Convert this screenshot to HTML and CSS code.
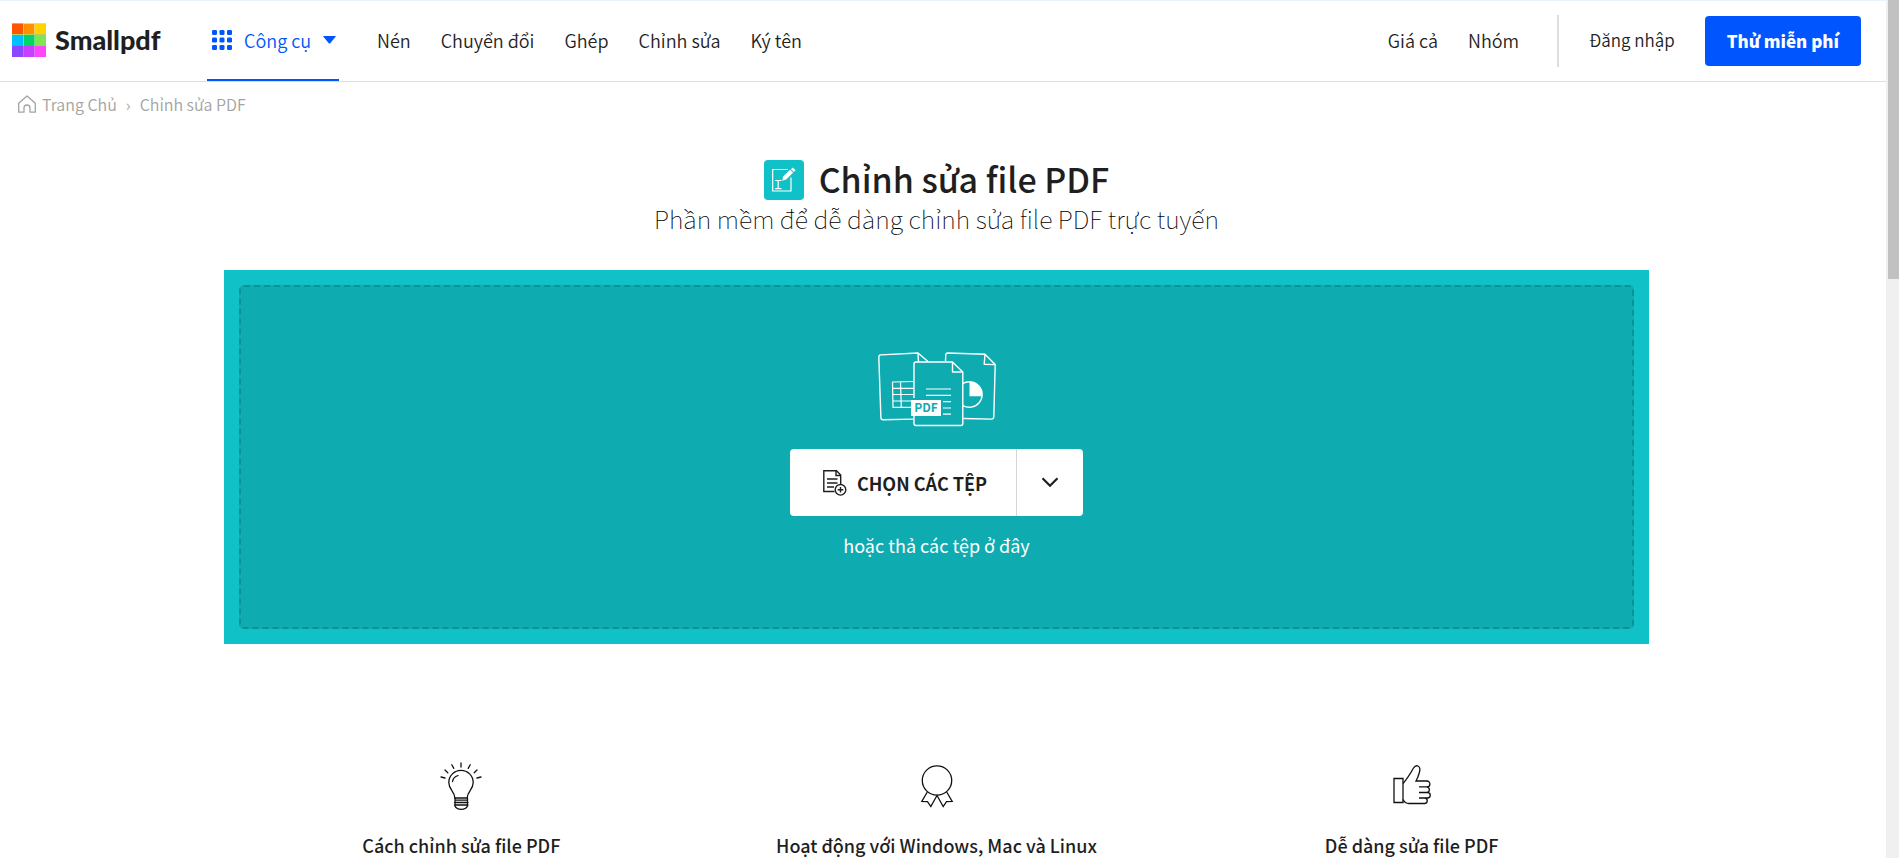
FILE: index.html
```html
<!DOCTYPE html>
<html lang="vi">
<head>
<meta charset="utf-8">
<meta name="viewport" content="width=device-width, initial-scale=1">
<title>Chỉnh sửa file PDF - Smallpdf</title>
<link rel="stylesheet" href="styles.css">
</head>
<body>
<div class="page">
  <header class="header">
    <a class="logo" href="#">
      <svg width="34" height="34" viewBox="0 0 34 34" aria-hidden="true">
        <rect width="34" height="34" fill="#ff9a5c"/>
        <rect x="0" y="1" width="11" height="10" fill="#ff5500"/><rect x="12" y="1" width="10" height="10" fill="#ff9000"/><rect x="23" y="1" width="11" height="10" fill="#ffd200"/>
        <rect x="11" y="0" width="23" height="1" fill="#ffd27a"/><rect x="11" y="1" width="1" height="10" fill="#ffb45c"/><rect x="22" y="1" width="1" height="10" fill="#ffc75c"/>
        <rect y="11" width="34" height="23" fill="#9b7dff"/>
        <rect y="11" width="34" height="1" fill="#b0d060"/>
        <rect x="0" y="12" width="11" height="11" fill="#00bfff"/><rect x="11" y="12" width="1" height="11" fill="#5ce0d0"/><rect x="12" y="12" width="10" height="11" fill="#00d46a"/><rect x="22" y="12" width="1" height="11" fill="#60df80"/><rect x="23" y="12" width="11" height="11" fill="#80e650"/>
        <rect x="0" y="23" width="11" height="11" fill="#8c46ff"/><rect x="12" y="23" width="10" height="11" fill="#c840ff"/><rect x="22" y="23" width="1" height="11" fill="#e070ff"/><rect x="23" y="23" width="11" height="11" fill="#ff46fa"/>
      </svg>
      <span class="logo-name">Smallpdf</span>
    </a>
    <button class="tools" type="button">
      <svg width="20" height="20" viewBox="0 0 20 20" fill="#0055ff" aria-hidden="true">
        <rect width="5" height="5" rx="1.3"/><rect x="7.5" width="5" height="5" rx="1.3"/><rect x="15" width="5" height="5" rx="1.3"/>
        <rect y="7.5" width="5" height="5" rx="1.3"/><rect x="7.5" y="7.5" width="5" height="5" rx="1.3"/><rect x="15" y="7.5" width="5" height="5" rx="1.3"/>
        <rect y="15" width="5" height="5" rx="1.3"/><rect x="7.5" y="15" width="5" height="5" rx="1.3"/><rect x="15" y="15" width="5" height="5" rx="1.3"/>
      </svg>
      <span>Công cụ</span>
      <svg width="13" height="8" viewBox="0 0 13 8" fill="#0055ff" aria-hidden="true"><path d="M.8 0h11.4q1 0 .4.8L7.2 7.2q-.7.6-1.4 0L.4.8Q-.2 0 .8 0z"/></svg>
    </button>
    <nav class="nav">
      <a href="#">Nén</a>
      <a href="#">Chuyển đổi</a>
      <a href="#">Ghép</a>
      <a href="#">Chỉnh sửa</a>
      <a href="#">Ký tên</a>
    </nav>
    <nav class="nav nav-end">
      <a href="#">Giá cả</a>
      <a href="#">Nhóm</a>
    </nav>
    <div class="account">
      <a class="login" href="#">Đăng nhập</a>
      <button class="trial" type="button">Thử miễn phí</button>
    </div>
  </header>

  <nav class="crumbs" aria-label="Breadcrumb">
    <a href="#">
      <svg width="18" height="18" viewBox="0 0 18 18" fill="none" stroke="#a3a3a3" stroke-width="1.3" stroke-linejoin="round" aria-hidden="true"><path d="M.7 8.3 9 .9l8.300 7.400V17.200H12v-4.200a3 3 0 0 0-6 0v4.200H.7z"/></svg>
      <span>Trang Chủ</span>
    </a>
    <span>›</span>
    <span>Chỉnh sửa PDF</span>
  </nav>

  <main class="main">
    <div class="title-row">
      <svg width="40" height="40" viewBox="0 0 40 40" aria-hidden="true">
        <rect width="40" height="40" rx="4" fill="#10c1c7"/>
        <path d="M27 17.500V31H8.700V9.500H24" fill="none" stroke="#fff" stroke-width="1.200"/>
        <path d="M11 20.500h6.500M11 28.700h6.500M14.200 20.500v8.200" fill="none" stroke="#fff" stroke-width="1.200"/>
        <path d="M18.300 20.800l.8-4.300 7-6.700 3 2.900-6.900 6.900z" fill="#fff"/><path d="M26.900 9.200l1.900-1.700 2.800 2.800-1.800 1.800z" fill="#fff"/>
      </svg>
      <h1>Chỉnh sửa file PDF</h1>
    </div>
    <p class="subtitle">Phần mềm để dễ dàng chỉnh sửa file PDF trực tuyến</p>

    <section class="drop">
      <div class="drop-inner">
        <svg class="art" width="118" height="76" viewBox="0 0 118 76" fill="none" stroke="#fff" stroke-width="1.400" stroke-linejoin="round" aria-hidden="true">
          <path d="M35.500 67.100 5 67.700q-2 0-2.100-2L.8 5Q.8 3 2.800 2.900L40 1l10 8.500"/>
          <path d="M40 1l.5 9"/>
          <path d="M67.500 9 67.800 2.500q.2-1.500 1.700-1.500L107 2.200l10.200 10.300L115.800 65q-.2 2-2 2.100L85.500 66.500"/>
          <path d="M107 2.200l-.8 10 11 .4"/>
          <path d="M36 29.500 14.500 30l.5 25.300h18M36 36.300H15M36 42.500H15M36 49H15M22.500 30l.8 25" stroke-width="1.200"/>
          <path d="M84.800 31.500a12.800 12.800 0 1 1 0 22"/>
          <path d="M91.500 29.500v14.700h12.300a13 13 0 0 0-12.300-14.700z" fill="#fff" stroke="none"/>
          <path d="M36 46V12q0-2 2-2h36.500L84.800 20v51.500q0 2-2 2H38q-2 0-2-2V64"/>
          <path d="M74.500 10v10h10.300"/>
          <path d="M48 37h25M48 43.300h25M65 49.600h8M65 56h8M65 62.200h8" stroke-width="1.200"/>
          <rect x="33" y="48" width="30" height="16" fill="#fff" stroke="none"/>
          <text class="art-label" x="48" y="60" text-anchor="middle">PDF</text>
        </svg>
        <div class="picker">
          <button class="choose" type="button">
            <svg width="24" height="26" viewBox="0 0 24 26" fill="none" stroke="#1f1f1f" stroke-width="1.400" aria-hidden="true">
              <path d="M11.500 21.500H.8V.8h12.700l4.200 4.200v9"/><path d="M13 .8V5.500h4.700" /><path d="M4 9h10.500M4 13h10.500M4 17h7"/>
              <circle cx="17.500" cy="19.800" r="5.300"/><path d="M17.500 17v5.600M14.700 19.800h5.600"/>
            </svg>
            <span>CHỌN CÁC TỆP</span>
          </button>
          <button class="more" type="button" aria-label="Nguồn khác">
            <svg width="18" height="11" viewBox="0 0 18 11" fill="none" stroke="#1f1f1f" stroke-width="2.200" aria-hidden="true"><path d="M1.500 1.200 9 8.700l7.500-7.500"/></svg>
          </button>
        </div>
        <p class="hint">hoặc thả các tệp ở đây</p>
      </div>
    </section>

    <section class="features">
      <article>
        <svg width="42" height="50" viewBox="0 0 42 50" fill="none" stroke="#111" stroke-width="1.300" stroke-linecap="round" aria-hidden="true">
          <path d="M21 2v4M11.800 3.800l2 3.600M30.200 3.800l-2 3.600M5 9l2.800 2.700M37 9l-2.800 2.700M1 16l4 1M41 16l-4 1"/>
          <path d="M14.800 37c0-7-6-8-6-15.500a12.200 12.200 0 0 1 24.400 0c0 7.500-6 8.500-6 15.500z"/>
          <path d="M12.500 20.500c.5-3 2.500-5 5.500-6"/>
          <path d="M15 39.200h12.500M14.500 41.500h13.500M14.500 44h13.500M15 37v7M27.500 37v7M15 45c2 4.500 10.500 4.500 12.500 0"/>
        </svg>
        <h2>Cách chỉnh sửa file PDF</h2>
      </article>
      <article>
        <svg width="34" height="50" viewBox="0 0 34 50" fill="none" stroke="#111" stroke-width="1.300" aria-hidden="true">
          <circle cx="17" cy="19.500" r="14.700"/>
          <path d="M7.300 31 1.800 40.500l5.700.2 3.300 4.800L17 34.500l6.200 11 3.300-4.800 5.700-.2L26.700 31"/>
        </svg>
        <h2>Hoạt động với Windows, Mac và Linux</h2>
      </article>
      <article>
        <svg width="38" height="50" viewBox="0 0 38 50" fill="none" stroke="#111" stroke-width="1.300" aria-hidden="true">
          <path d="M1 17.500h9v24H1z"/>
          <path d="M10 22.500C14 18 18 11.500 20.500 7q2-3 4.500-2 3 1.500 1.200 7-1 4-3.200 8h11a2.900 2.900 0 0 1 0 5.800H26"/>
          <path d="M34 25.800a2.900 2.900 0 0 1 0 5.700H26M34.500 31.500a2.700 2.700 0 0 1 0 5.500H26M31.500 37a2.700 2.700 0 0 1 0 5.500H16q-4 0-6-4"/>
        </svg>
        <h2>Dễ dàng sửa file PDF</h2>
      </article>
    </section>
  </main>
</div>
<div class="scrollbar" aria-hidden="true"><div class="thumb"></div></div>
</body>
</html>
```
FILE: styles.css
```css
* {
  box-sizing: border-box;
}

body {
  margin: 0;
  height: 100vh;
  display: flex;
  overflow: hidden;
  background: #fff;
  color: #1f1f1f;
  font-family: "Noto Sans CJK SC", "Noto Sans", sans-serif;
  font-size: 18px;
  line-height: 24px;
}

a {
  color: inherit;
  text-decoration: none;
}

button {
  border: 0;
  padding: 0;
  background: none;
  color: inherit;
  font: inherit;
}

h1, h2, p {
  margin: 0;
}

svg {
  display: block;
  flex: none;
}

.page {
  flex: 1;
  min-width: 0;
}

.header {
  display: flex;
  align-items: center;
  height: 82px;
  padding: 0 25px 0 12px;
  border-top: 1px solid #ebf3ff;
  border-bottom: 1px solid #dedede;
  font-weight: 350;
  white-space: nowrap;
}

.logo {
  display: flex;
  align-items: center;
  gap: 9px;
  width: 195px;
  padding-bottom: 2px;
}

.logo-name {
  font-family: Lato, sans-serif;
  font-size: 27px;
  line-height: 32px;
  font-weight: 900;
}

.tools {
  display: flex;
  align-items: center;
  align-self: stretch;
  width: 132px;
  padding: 0 4px 0 5px;
  gap: 12px;
  border-bottom: 2px solid #0055ff;
  color: #0055ff;
}

.nav {
  display: flex;
  gap: 30px;
  margin-left: 38px;
  padding-bottom: 2px;
}

.nav-end {
  margin-left: auto;
}

.account {
  display: flex;
  align-items: center;
  height: 52px;
  margin-left: 38px;
  padding-left: 30px;
  border-left: 2px solid #dedede;
}

.login {
  padding-bottom: 2px;
  font-size: 17px;
}

.trial {
  height: 50px;
  margin-left: 30px;
  padding: 0 22px;
  border-radius: 4px;
  background: #0055ff;
  color: #fff;
  font-size: 17px;
  font-weight: 900;
}

.crumbs {
  display: flex;
  align-items: center;
  gap: 9px;
  padding: 10px 18px;
  color: #a3a3a3;
  font-size: 16px;
  font-weight: 350;
}

.crumbs a {
  display: flex;
  align-items: center;
  gap: 6px;
}

.main {
  display: flex;
  flex-direction: column;
  align-items: center;
  padding: 34px 13px 0 0;
}

.title-row {
  display: flex;
  align-items: center;
  gap: 15px;
}

h1 {
  padding-bottom: 2px;
  font-size: 34px;
  line-height: 38px;
  font-weight: 500;
}

.subtitle {
  color: #000;
  font-size: 25px;
  line-height: 36px;
  font-weight: 100;
}

.drop {
  width: calc(76% + 2px);
  margin-top: 34px;
  padding: 15px;
  background: #10c1c7;
}

.drop-inner {
  display: flex;
  flex-direction: column;
  align-items: center;
  padding: 65px 0 70px;
  border: 2px dashed #0c9296;
  border-radius: 5px;
  background: #0eacb1;
}

.art-label {
  fill: #0eacb1;
  stroke: none;
  font-family: "Noto Sans CJK SC", sans-serif;
  font-size: 12px;
  font-weight: 700;
}

.picker {
  display: flex;
  height: 67px;
  margin-top: 21px;
  border-radius: 4px;
  background: #fff;
}

.choose {
  display: flex;
  align-items: center;
  gap: 10px;
  padding: 0 29px 0 33px;
  border-right: 1px solid #d6d6d6;
  font-weight: 700;
}

.more {
  display: flex;
  align-items: center;
  justify-content: center;
  width: 66px;
}

.hint {
  margin-top: 17px;
  color: #fff;
}

.features {
  display: grid;
  grid-template-columns: repeat(3, 1fr);
  width: calc(76% + 2px);
  margin-top: 117px;
}

.features article {
  display: flex;
  flex-direction: column;
  align-items: center;
  gap: 22px;
}

h2 {
  font-size: 18px;
  line-height: 24px;
  font-weight: 500;
}

.scrollbar {
  width: 13px;
  padding-left: 2px;
  background: #f0f0f0;
}

.thumb {
  height: 279px;
  background: #c1c1c1;
}
```
